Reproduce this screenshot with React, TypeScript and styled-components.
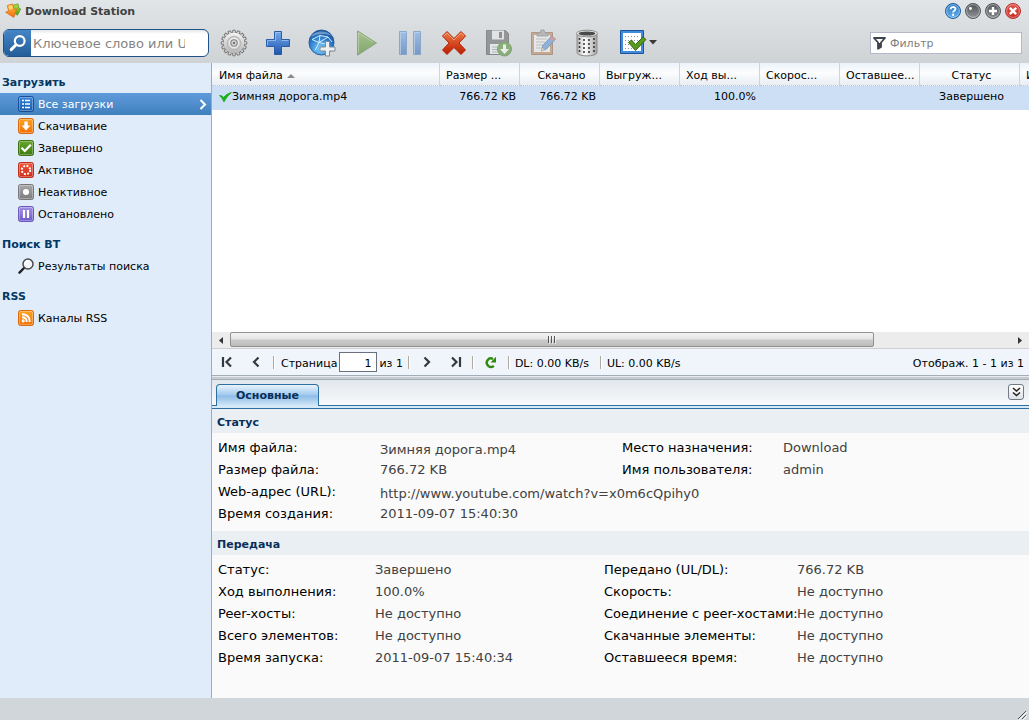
import React, { useState } from "react";
import styled, { createGlobalStyle, css } from "styled-components";

const GlobalStyle = createGlobalStyle`
  *, *::before, *::after { box-sizing: border-box; }
  body {
    margin: 0;
    font-family: "DejaVu Sans", Verdana, sans-serif;
    font-size: 11px;
    line-height: 14px;
    color: #000;
  }
  button, input { font: inherit; }
`;

/* ---------- window frame ---------- */

const Window = styled.div`
  display: flex;
  flex-direction: column;
  min-height: 100vh;
  background: #d1d6da;
`;

const Top = styled.header`
  background: linear-gradient(#e1e5e8, #cfd3d6);
`;

const TitleBar = styled.div`
  display: flex;
  align-items: center;
  gap: 4px;
  height: 22px;
  padding: 0 8px 0 5px;
`;

const Title = styled.h1`
  flex: 1;
  margin: 0;
  padding-top: 1px;
  font-size: 11px;
  font-weight: bold;
  color: #414141;
`;

const PlainButton = styled.button`
  display: flex;
  align-items: center;
  justify-content: center;
  flex: none;
  border: 0;
  padding: 0;
  background: none;
  color: inherit;
  cursor: pointer;
`;

const WindowButton = styled(PlainButton)`
  width: 16px;
  height: 18px;
`;

const Toolbar = styled.div`
  display: flex;
  align-items: center;
  height: 41px;
  padding-right: 7px;
`;

const SearchArea = styled.div`
  flex: none;
  width: 212px;
  padding: 0 3px;
`;

const SearchBox = styled.form`
  display: flex;
  height: 28px;
  border: 1px solid #1f5287;
  border-radius: 6px;
  overflow: hidden;
  background: linear-gradient(#e4e7e9, #fff 4px);
`;

const SearchButton = styled(PlainButton)`
  width: 27px;
  background: linear-gradient(#4686c6, #235c99);
`;

const SearchInput = styled.input`
  width: 155px;
  border: 0;
  padding: 2px 1px 0 2px;
  font-size: 13px;
  background: none;
  outline: none;
  &::placeholder { color: #858585; opacity: 1; }
`;

const ToolGroup = styled.div`
  display: flex;
  flex: 1;
`;

const ToolButton = styled(PlainButton)<{ $wide?: boolean }>`
  width: ${(p) => (p.$wide ? 60 : 44)}px;
  height: 32px;
  gap: 2px;
  &:disabled { opacity: 0.55; cursor: default; }
`;

const FilterBox = styled.label`
  display: flex;
  align-items: center;
  gap: 4px;
  width: 152px;
  height: 22px;
  padding: 0 2px;
  border: 1px solid #b5b8c8;
  background: #fff;
`;

const FilterInput = styled.input`
  flex: 1;
  min-width: 0;
  border: 0;
  padding: 2px 0 0;
  background: none;
  outline: none;
  &::placeholder { color: #808080; opacity: 1; }
`;

const Body = styled.div`
  display: flex;
  flex: 1;
`;

const Footer = styled.footer`
  display: flex;
  align-items: flex-end;
  justify-content: flex-end;
  height: 22px;
  background: #d1d6da;
`;

/* ---------- sidebar ---------- */

const Sidebar = styled.nav`
  flex: none;
  width: 212px;
  padding-top: 8px;
  border-right: 1px solid #9fabb6;
  background: #e0ecfa;
`;

const NavSection = styled.section`
  margin-bottom: 8px;
`;

const NavHeading = styled.h2`
  margin: 0;
  padding: 2px 0 0 2px;
  font-size: 11px;
  line-height: 20px;
  color: #023764;
`;

const NavItem = styled(PlainButton)<{ $active: boolean }>`
  justify-content: flex-start;
  gap: 4px;
  width: 100%;
  height: 22px;
  padding: 0 4px 0 18px;
  ${(p) =>
    p.$active &&
    css`
      color: #fff;
      background: linear-gradient(#5f9bdb, #4080bd);
    `}
`;

const NavLabel = styled.span`
  flex: 1;
  padding-top: 2px;
  text-align: left;
`;

/* ---------- list ---------- */

const Main = styled.main`
  display: flex;
  flex-direction: column;
  flex: 1;
  min-width: 0;
  background: #fff;
`;

const GridArea = styled.div`
  flex: 1;
  min-height: 269px;
  overflow: hidden;
`;

const Grid = styled.table`
  width: 1000px;
  table-layout: fixed;
  border-collapse: separate;
  border-spacing: 0;
`;

const HeadCell = styled.th<{ $align?: string }>`
  height: 23px;
  padding: 3px 2px 0 6px;
  border-right: 1px solid #d0d4d8;
  border-bottom: 1px dotted #b9c6d4;
  overflow: hidden;
  font-weight: normal;
  text-align: ${(p) => p.$align || "left"};
  white-space: nowrap;
  background: linear-gradient(#ecf3fa, #fcfdfe 45%, #e9edf2);
  &:first-child { padding-left: 7px; }
`;

const SortMark = styled.span`
  display: inline-block;
  margin-left: 4px;
  border: 4px solid transparent;
  border-top-width: 0;
  border-bottom-color: #8a8a8a;
  vertical-align: 1px;
`;

const Cell = styled.td<{ $align?: string }>`
  height: 24px;
  padding: 0 4px 3px 7px;
  overflow: hidden;
  white-space: nowrap;
  text-align: ${(p) => p.$align || "left"};
  background: #cddff4;
`;

const FileName = styled.span`
  display: flex;
  align-items: center;
`;

const ScrollBar = styled.div`
  display: flex;
  height: 17px;
  border-bottom: 1px solid #d0d0d0;
  background: #ececec;
`;

const ScrollArrow = styled(PlainButton)`
  width: 18px;
`;

const ScrollTrack = styled.div`
  flex: 1;
`;

const ScrollThumb = styled.div`
  display: flex;
  align-items: center;
  justify-content: center;
  width: 82.5%;
  height: 15px;
  border: 1px solid #909090;
  border-radius: 2px;
  background: linear-gradient(#f3f3f3, #e4e4e4 48%, #cbcbcb 52%, #bcbcbc);
`;

const Pager = styled.div`
  display: flex;
  align-items: center;
  height: 26px;
  padding: 0 5px 0 0;
  background: #eff5fa;
`;

const PagerButton = styled(PlainButton)`
  width: 29px;
  height: 22px;
`;

const PagerText = styled.span<{ $width?: number }>`
  min-width: ${(p) => p.$width ?? 0}px;
  padding-top: 3px;
`;

const Divider = styled.span<{ $before?: number; $after?: number }>`
  width: 2px;
  height: 13px;
  margin: 0 ${(p) => p.$after ?? 6}px 0 ${(p) => p.$before ?? 4}px;
  border-left: 1px solid #b0aa9c;
  border-right: 1px solid #fff;
`;

const PageInput = styled.input`
  width: 38px;
  height: 20px;
  margin: 0 2px;
  padding: 2px 5px 0;
  border: 1px solid #68717c;
  text-align: right;
  background: #fff;
`;

const Spacer = styled.span`
  flex: 1;
`;

const Splitter = styled.div`
  height: 5px;
  border-top: 1px solid #a3adb5;
  border-bottom: 1px solid #a3adb5;
  background: linear-gradient(#e6eaed 1px, #c6cdd2 1px);
`;

/* ---------- details ---------- */

const TabStrip = styled.div`
  display: flex;
  align-items: flex-end;
  height: 26px;
  padding: 0 5px 0 4px;
  border-bottom: 1px solid #2f6f9f;
  background: linear-gradient(#e2e7ec, #f8f9fb);
`;

const TabLine = styled.div`
  height: 3px;
  border-bottom: 1px solid #2f6f9f;
  background: #d5e9f8;
`;

const Tab = styled(PlainButton)`
  width: 103px;
  height: 22px;
  margin-bottom: -1px;
  border: 1px solid #2f6f9f;
  border-bottom: 0;
  border-radius: 4px 4px 0 0;
  font-weight: bold;
  color: #08305a;
  background: linear-gradient(#e9f4fd, #9fc9ee 48%, #8cbce7 52%, #d5e9f8);
`;

const CollapseButton = styled(PlainButton)`
  width: 16px;
  height: 16px;
  margin-bottom: 5px;
  border: 1px solid #6f7a84;
  border-radius: 3px;
  background: linear-gradient(#fff, #dfe4e8);
`;

const Details = styled.section`
  background: #fafafa;
`;

const Block = styled.section<{ $last?: boolean }>`
  padding-bottom: ${(p) => (p.$last ? 29 : 6)}px;
`;

const BlockHeading = styled.h2`
  margin: 0 0 4px;
  padding: 3px 0 0 5px;
  font-size: 11px;
  line-height: 21px;
  color: #08305a;
  background: #eaeff4;
`;

const InfoTable = styled.table`
  width: 100%;
  table-layout: fixed;
  border-collapse: collapse;
  font-size: 13px;
  line-height: 18px;
`;

const InfoLabel = styled.th`
  padding: 2px 0 2px 6px;
  font-weight: normal;
  text-align: left;
  vertical-align: top;
  white-space: nowrap;
`;

const InfoValue = styled.td<{ $selectable?: boolean }>`
  padding: ${(p) => (p.$selectable ? "4px 0 0 6px" : "2px 0 2px 6px")};
  color: #414141;
  vertical-align: top;
  white-space: nowrap;
`;

/* ---------- drawings ---------- */

type Stops = [string, string];

const Grad = ({ id, c }: { id: string; c: Stops }) => (
  <linearGradient id={id} x1="0" y1="0" x2="0" y2="1">
    <stop offset="0" stopColor={c[0]} />
    <stop offset="1" stopColor={c[1]} />
  </linearGradient>
);

const AppIcon = () => (
  <svg width="16" height="16" viewBox="0 0 16 16">
    <defs>
      <Grad id="apG" c={["#b5e34c", "#4f9a10"]} />
      <Grad id="apO" c={["#ffc83d", "#ee6a10"]} />
    </defs>
    <path d="M8 2.300l5-1.500 1 4.700 1.800.4-3.300 6.300-5.500-3.200z" fill="url(#apG)" stroke="#5a9a1c" strokeWidth=".7" />
    <path d="M2.300 2.600l5.200-1.700 1.500 5.300 2.600-.2-2.800 8.500L.6 9.200l3-1.200z" fill="url(#apO)" stroke="#e0701c" strokeWidth=".8" />
    <path d="M3.400 3.400l3.600-1.200 1 3.600-3.600 1z" fill="#ffe590" opacity=".8" />
  </svg>
);

const OrbIcon = ({ kind }: { kind: "help" | "min" | "max" | "close" }) => {
  const c: Record<string, Stops> = {
    help: ["#2b78c4", "#5fb0ee"],
    min: ["#4c4f52", "#95989b"],
    max: ["#55585b", "#86898c"],
    close: ["#e0564e", "#c8241d"],
  };
  const edge = { help: "#1c5c9f", min: "#55585b", max: "#55585b", close: "#b5302a" }[kind];
  return (
    <svg width="16" height="16" viewBox="0 0 16 16">
      <defs>
        <Grad id={"orb" + kind} c={c[kind]} />
      </defs>
      <circle cx="8" cy="8" r="7.500" fill={`url(#orb${kind})`} stroke={edge} />
      <circle cx="8" cy="8" r="6.400" fill="none" stroke="#fff" strokeOpacity=".4" />
      {kind === "help" && (
        <>
          <path d="M5.600 6.300c0-3 4.900-3 4.900-.2C10.500 7.700 8.100 7.600 8.100 9.600" fill="none" stroke="#fff" strokeWidth="1.800" />
          <rect x="7.100" y="10.800" width="2" height="2" fill="#fff" />
        </>
      )}
      {kind === "min" && <circle cx="5.500" cy="5.500" r="1.400" fill="#fff" />}
      {kind === "max" && <path d="M8 4v8M4 8h8" stroke="#fff" strokeWidth="2.400" />}
      {kind === "close" && <path d="M4.800 4.800l6.400 6.400M11.200 4.800l-6.400 6.400" stroke="#fff" strokeWidth="2.400" />}
    </svg>
  );
};

const SearchIcon = () => (
  <svg width="18" height="18" viewBox="0 0 18 18" fill="none" stroke="#fff">
    <circle cx="10.700" cy="7" r="4.900" strokeWidth="2.200" />
    <path d="M7 10.800l-4.800 4.800" strokeWidth="3" strokeLinecap="round" />
  </svg>
);

const GearIcon = () => (
  <svg width="28" height="28" viewBox="-14 -14 28 28">
    <defs>
      <Grad id="gear" c={["#f4f4f4", "#b5b5b5"]} />
    </defs>
    {Array.from({ length: 16 }, (_, i) => (
      <path
        key={i}
        d="M-1.700 -10L-1.100 -12.800H1.100L1.700 -10Z"
        transform={`rotate(${(i * 360) / 16})`}
        fill="#dcdcdc"
        stroke="#777"
        strokeWidth="1"
      />
    ))}
    <circle r="10.500" fill="url(#gear)" />
    <circle r="6.800" fill="#c6c6c6" stroke="#b0b0b0" strokeWidth=".8" />
    <circle r="5" fill="#e8e8e8" stroke="#f4f4f4" strokeWidth=".8" />
    <circle r="3.200" fill="#d8d8d8" stroke="#808080" strokeWidth="1.100" />
    <circle r="1.300" fill="#777" />
  </svg>
);

const PlusIcon = () => (
  <svg width="26" height="26" viewBox="0 0 26 26">
    <defs>
      <Grad id="plus" c={["#76aaea", "#1e55ae"]} />
    </defs>
    <path d="M9.500 1.500h7v8h8v7h-8v8h-7v-8h-8v-7h8z" fill="url(#plus)" stroke="#2a5ca8" />
    <path d="M10.500 10.500v-8h5M2.500 15.500v-5h8M16.500 10.500h7" fill="none" stroke="#a9ccf5" strokeOpacity=".7" />
  </svg>
);

const GlobeIcon = () => (
  <svg width="28" height="28" viewBox="0 0 28 28">
    <defs>
      <radialGradient id="globe" cx=".45" cy=".75" r=".75">
        <stop offset="0" stopColor="#7fd0ff" />
        <stop offset=".6" stopColor="#2c7ccb" />
        <stop offset="1" stopColor="#15509a" />
      </radialGradient>
    </defs>
    <circle cx="13.500" cy="13.500" r="12.500" fill="url(#globe)" stroke="#235f9f" />
    <path d="M4 10.500l8-4 8 1.500 4 5M12 6.500l-1 7 9-5.500M4 10.500l7 3-4 8M11 13.500l8 2" fill="none" stroke="#d4edff" strokeWidth="1" />
    <path d="M3 8C6 1.500 18 0 24 7 17 4 9 4.500 3 8z" fill="#fff" opacity=".35" />
    <path d="M17.500 12.500h4v5.500h5.500v4h-5.500v5h-4v-5h-5.500v-4h5.500z" fill="#eceeef" stroke="#7d8a96" />
  </svg>
);

const PlayIcon = () => (
  <svg width="28" height="28" viewBox="0 0 28 28">
    <defs>
      <Grad id="play" c={["#83ad52", "#3f8115"]} />
    </defs>
    <path d="M5.500 1.800L24.500 14 5.500 26.200z" fill="url(#play)" stroke="#4f8030" />
    <path d="M6.500 24V4L21 13" fill="none" stroke="#c0dd9f" strokeOpacity=".6" />
  </svg>
);

const PauseIcon = () => (
  <svg width="24" height="26" viewBox="0 0 24 26">
    <defs>
      <Grad id="pause" c={["#74a8e8", "#2d67b9"]} />
    </defs>
    <path d="M1.500 1.500h7v23h-7zM15.500 1.500h7v23h-7z" fill="url(#pause)" stroke="#4c7fbe" />
    <path d="M2.500 24V2.500H8M16.500 24V2.500H22" fill="none" stroke="#b4d2f5" strokeOpacity=".7" />
  </svg>
);

const RemoveIcon = () => (
  <svg width="26" height="26" viewBox="0 0 26 26">
    <defs>
      <Grad id="rem" c={["#f07a45", "#bb1a00"]} />
    </defs>
    <path d="M6 1.500l7 7 7-7 4.500 4.500-6.500 7 6.500 7-4.500 4.500-7-7-7 7L1.500 20 8 13 1.500 6z" fill="url(#rem)" stroke="#b02a0c" strokeLinejoin="round" />
    <path d="M3 6l3-3 7 7 7-7 3 3" fill="none" stroke="#f9b08c" strokeOpacity=".8" />
  </svg>
);

const SaveIcon = () => (
  <svg width="28" height="28" viewBox="0 0 28 28">
    <path d="M2.500 1.500h19l3 3v21h-22z" fill="#5f5f5f" stroke="#474747" />
    <path d="M8 1.500h12v9H8z" fill="#e9e9e9" />
    <path d="M15 3h3v6h-3z" fill="#555" />
    <path d="M6 15h15v10H6z" fill="#f2f2f2" />
    <path d="M8 18h9M8 20.500h9M8 23h9" stroke="#999" />
    <circle cx="20.500" cy="20" r="7" fill="#4e8f2a" stroke="#3f781f" />
    <path d="M19 15.500h3v4.500h3L20.500 25 16 20h3z" fill="#fff" />
  </svg>
);

const ClipboardIcon = () => (
  <svg width="28" height="28" viewBox="0 0 28 28">
    <path d="M3.500 3.500h21v22h-21z" fill="#b98458" stroke="#93603a" />
    <path d="M6 6h16v17H6z" fill="#f4f4f4" />
    <path d="M8 10h11M8 13h9M8 16h8M8 19h5" stroke="#a9a9a9" />
    <path d="M9 7V4h3l1-3h3l1 3h3v3z" fill="#9b9b9b" stroke="#777" />
    <path d="M23.500 7l4 3-9 10-5 2 1-5z" fill="#5b92d6" stroke="#3a67a3" />
    <path d="M23.500 7l4 3-2 2-4-3z" fill="#d66a5c" />
    <path d="M13.500 22l.6-3 2.400 2z" fill="#f3d9a5" />
  </svg>
);

const TrashIcon = () => (
  <svg width="28" height="28" viewBox="-3 0 28 28">
    <defs>
      <linearGradient id="bin" x1="0" x2="1" y1="0" y2="0">
        <stop offset="0" stopColor="#b5b5b5" />
        <stop offset=".4" stopColor="#fff" />
        <stop offset="1" stopColor="#a3a3a3" />
      </linearGradient>
    </defs>
    <path d="M2 5v18.500c0 4.500 20 4.500 20 0V5z" fill="url(#bin)" stroke="#8a8a8a" />
    {[9, 13, 17, 21].map((y) => (
      <path
        key={y}
        d={`M4.500 ${y}v2M9 ${y + 1}v2M14 ${y + 1}v2M19 ${y}v2`}
        stroke="#3a3a3a"
        strokeWidth="1.600"
      />
    ))}
    <ellipse cx="12" cy="4.500" rx="10.500" ry="3.300" fill="#ececec" stroke="#8a8a8a" />
    <ellipse cx="12" cy="4.500" rx="8.500" ry="2" fill="#4a4a4a" />
  </svg>
);

const ChecklistIcon = () => (
  <svg width="28" height="28" viewBox="0 0 28 28">
    <path d="M1.500 1.500h23v23h-23z" fill="#3f8bdd" stroke="#1c5399" strokeLinejoin="round" />
    <path d="M4 4h18v18H4z" fill="#fff" />
    <path d="M6 7.500h14M6 11.500h14M6 15.500h14M6 19.500h14" stroke="#8495a6" strokeDasharray="1 2" />
    <path d="M9.500 13.500l3-2.500 4 4.500 7.500-7.500 3 2.500-10.500 11z" fill="#579a1f" stroke="#356a0d" />
  </svg>
);

const CaretIcon = () => (
  <svg width="8" height="5" viewBox="0 0 8 5">
    <path d="M0 0h8L4 4.500z" fill="#3a3a3a" />
  </svg>
);

const FunnelIcon = () => (
  <svg width="13" height="14" viewBox="0 0 13 14">
    <path d="M1 2h11L8 6.500V11l-3 1.800V6.500z" fill="#fff" stroke="#3e444a" strokeWidth="1.800" strokeLinejoin="round" />
    <path d="M5 7h3v4l-3 2z" fill="#3e444a" />
  </svg>
);

const badgeColors: Record<string, [string, string, string]> = {
  all: ["#3a86dd", "#165cac", "#164f96"],
  down: ["#ffa424", "#f07004", "#d8690d"],
  done: ["#69a52e", "#3c7a10", "#3b7413"],
  active: ["#f0593d", "#cf2713", "#b9301d"],
  idle: ["#aaa", "#7b7b7b", "#777"],
  stop: ["#a393e8", "#6d57c7", "#6a58bb"],
  rss: ["#ffa424", "#f07004", "#d8690d"],
};

const marks: Record<string, React.ReactNode> = {
  all: <path d="M4 4.500h2M7 4.500h5M4 8h2M7 8h5M4 11.500h2M7 11.500h5" stroke="#fff" strokeWidth="1.500" />,
  down: <path d="M6.300 3.500h3.400v4h2.600L8 12.500 3.700 7.500h2.600z" fill="#fff" />,
  done: <path d="M3.500 7.800l3.300 3.200 6-6.300" fill="none" stroke="#fff" strokeWidth="2.200" />,
  active: <circle cx="8" cy="8" r="4.200" fill="none" stroke="#fff" strokeWidth="2" strokeDasharray="1.900 1.400" />,
  idle: <circle cx="8" cy="8" r="3" fill="#fff" />,
  stop: <path d="M6 4v8M10 4v8" stroke="#fff" strokeWidth="2.200" />,
  rss: (
    <g fill="none" stroke="#fff" strokeWidth="1.900">
      <path d="M4 7.300c3 0 4.700 1.700 4.700 4.700M4 4.200c5 0 7.800 2.800 7.800 7.800" />
      <circle cx="5.200" cy="10.900" r=".6" />
    </g>
  ),
};

const NavIcon = ({ kind }: { kind: string }) => {
  if (kind === "find") {
    return (
      <svg width="16" height="16" viewBox="0 0 16 16">
        <path d="M6 10l-4.500 4.700" stroke="#222" strokeWidth="2.400" strokeLinecap="round" />
        <circle cx="10" cy="6" r="5" fill="#f3f6f8" stroke="#4a4a4a" strokeWidth="1.500" />
        <path d="M7 6c0-2 1.500-3 3-3" fill="none" stroke="#fff" strokeWidth="1.500" />
      </svg>
    );
  }
  const [a, b, edge] = badgeColors[kind];
  return (
    <svg width="16" height="16" viewBox="0 0 16 16">
      <defs>
        <Grad id={"nav" + kind} c={[a, b]} />
      </defs>
      <rect x=".5" y=".5" width="15" height="15" rx="2" fill={`url(#nav${kind})`} stroke={edge} />
      <rect x="1.500" y="1.500" width="13" height="13" rx="1" fill="none" stroke="#fff" strokeOpacity=".3" />
      {marks[kind]}
    </svg>
  );
};

const ChevronIcon = () => (
  <svg width="8" height="11" viewBox="0 0 8 11">
    <path d="M1.500 1l4.500 4.500L1.500 10" fill="none" stroke="#fff" strokeWidth="2" />
  </svg>
);

const TickIcon = () => (
  <svg width="13" height="12" viewBox="0 0 13 12">
    <path d="M.5 4.500C2.500 4.500 3.500 5 4.500 6.500 7 3.500 9.500 2.200 12.500 1.500 9 4.500 7 7 5 11 4 8.500 2.500 6.500.5 4.500z" fill="#16b516" stroke="#16a016" strokeWidth=".7" />
  </svg>
);

const PageIcon = ({ kind }: { kind: "first" | "prev" | "next" | "last" }) => {
  const paths = {
    first: "M2 1v10M10 1.500L5.500 6l4.500 4.500",
    prev: "M8.500 1.500L4 6l4.500 4.500",
    next: "M3.500 1.500L8 6l-4.500 4.500",
    last: "M10 1v10M2 1.500L6.500 6 2 10.500",
  };
  return (
    <svg width="12" height="12" viewBox="0 0 12 12">
      <path d={paths[kind]} fill="none" stroke="#333a42" strokeWidth="2.200" />
    </svg>
  );
};

const RefreshIcon = () => (
  <svg width="13" height="13" viewBox="0 0 13 13">
    <path d="M9.800 9.800A4.200 4.200 0 1 1 9 3" fill="none" stroke="#2f8a0c" strokeWidth="2.400" />
    <path d="M12 .8v5.700H6.500z" fill="#2f8a0c" />
  </svg>
);

const ArrowIcon = ({ right }: { right?: boolean }) => (
  <svg width="4" height="7" viewBox="0 0 4 7">
    <path d={right ? "M0 0v7l4-3.500z" : "M4 0v7L0 3.500z"} fill="#333" />
  </svg>
);

const RidgesIcon = () => (
  <svg width="9" height="8" viewBox="0 0 9 8">
    <path d="M.5 0v7M3.500 0v7M6.500 0v7" stroke="#555" />
    <path d="M1.500 0v8M4.500 0v8M7.500 0v8" stroke="#fff" strokeOpacity=".6" />
  </svg>
);

const CollapseIcon = () => (
  <svg width="9" height="10" viewBox="0 0 9 10">
    <path d="M1 1l3.500 3L8 1M1 5.500l3.500 3 3.500-3" fill="none" stroke="#222" strokeWidth="1.500" />
  </svg>
);

const GripIcon = () => (
  <svg width="12" height="10" viewBox="0 0 12 10">
    <path d="M1 9L9 1M5 9l4-4" stroke="#4e5358" />
    <path d="M2 10l8-8M6 10l4-4" stroke="#fff" />
  </svg>
);

/* ---------- data ---------- */

const sections = [
  {
    title: "Загрузить",
    items: [
      ["all", "Все загрузки"],
      ["down", "Скачивание"],
      ["done", "Завершено"],
      ["active", "Активное"],
      ["idle", "Неактивное"],
      ["stop", "Остановлено"],
    ],
  },
  { title: "Поиск BT", items: [["find", "Результаты поиска"]] },
  { title: "RSS", items: [["rss", "Каналы RSS"]] },
];

const tools = [
  { label: "Настройки", icon: <GearIcon /> },
  { label: "Добавить", icon: <PlusIcon /> },
  { label: "Добавить URL", icon: <GlobeIcon /> },
  { label: "Возобновить", icon: <PlayIcon />, disabled: true },
  { label: "Пауза", icon: <PauseIcon />, disabled: true },
  { label: "Удалить", icon: <RemoveIcon /> },
  { label: "Сохранить", icon: <SaveIcon />, disabled: true },
  { label: "Изменить", icon: <ClipboardIcon />, disabled: true },
  { label: "Очистить", icon: <TrashIcon /> },
];

const columns = [
  { title: "Размер ...", value: "766.72 KB", align: "right" },
  { title: "Скачано", value: "766.72 KB", align: "right", head: "center" },
  { title: "Выгруж...", value: "" },
  { title: "Ход вы...", value: "100.0%", align: "right" },
  { title: "Скорос...", value: "" },
  { title: "Оставшее...", value: "" },
  { title: "Статус", value: "Завершено", align: "center", head: "center", width: 100 },
  { title: "Источник", value: "" },
];

type Info = { label: string; value: string; selectable?: boolean };

const statusRows: [Info, Info?][] = [
  [
    { label: "Имя файла:", value: "Зимняя дорога.mp4", selectable: true },
    { label: "Место назначения:", value: "Download" },
  ],
  [
    { label: "Размер файла:", value: "766.72 KB" },
    { label: "Имя пользователя:", value: "admin" },
  ],
  [{ label: "Web-адрес (URL):", value: "http://www.youtube.com/watch?v=x0m6cQpihy0", selectable: true }],
  [{ label: "Время создания:", value: "2011-09-07 15:40:30" }],
];

const transferRows: [Info, Info?][] = [
  [{ label: "Статус:", value: "Завершено" }, { label: "Передано (UL/DL):", value: "766.72 KB" }],
  [{ label: "Ход выполнения:", value: "100.0%" }, { label: "Скорость:", value: "Не доступно" }],
  [{ label: "Peer-хосты:", value: "Не доступно" }, { label: "Соединение с peer-хостами:", value: "Не доступно" }],
  [{ label: "Всего элементов:", value: "Не доступно" }, { label: "Скачанные элементы:", value: "Не доступно" }],
  [{ label: "Время запуска:", value: "2011-09-07 15:40:34" }, { label: "Оставшееся время:", value: "Не доступно" }],
];

const InfoBlock = ({
  title,
  rows,
  widths,
  last,
}: {
  title: string;
  rows: [Info, Info?][];
  widths: number[];
  last?: boolean;
}) => (
  <Block $last={last}>
    <BlockHeading>{title}</BlockHeading>
    <InfoTable>
      <colgroup>
        {widths.map((w, i) => (
          <col key={i} width={w} />
        ))}
        <col />
      </colgroup>
      <tbody>
        {rows.map(([a, b]) => (
          <tr key={a.label}>
            <InfoLabel scope="row">{a.label}</InfoLabel>
            <InfoValue $selectable={a.selectable} colSpan={b ? 1 : 3}>
              {a.value}
            </InfoValue>
            {b && (
              <>
                <InfoLabel scope="row">{b.label}</InfoLabel>
                <InfoValue>{b.value}</InfoValue>
              </>
            )}
          </tr>
        ))}
      </tbody>
    </InfoTable>
  </Block>
);

export default function App() {
  const [active, setActive] = useState("all");

  return (
    <Window>
      <GlobalStyle />
      <Top>
        <TitleBar>
          <AppIcon />
          <Title>Download Station</Title>
          <WindowButton aria-label="Справка"><OrbIcon kind="help" /></WindowButton>
          <WindowButton aria-label="Свернуть"><OrbIcon kind="min" /></WindowButton>
          <WindowButton aria-label="Развернуть"><OrbIcon kind="max" /></WindowButton>
          <WindowButton aria-label="Закрыть"><OrbIcon kind="close" /></WindowButton>
        </TitleBar>
        <Toolbar>
          <SearchArea>
            <SearchBox onSubmit={(e) => e.preventDefault()}>
              <SearchButton aria-label="Поиск"><SearchIcon /></SearchButton>
              <SearchInput aria-label="Поиск" placeholder="Ключевое слово или URL" />
            </SearchBox>
          </SearchArea>
          <ToolGroup>
            {tools.map((t) => (
              <ToolButton key={t.label} aria-label={t.label} disabled={t.disabled}>
                {t.icon}
              </ToolButton>
            ))}
            <ToolButton $wide aria-label="Действия">
              <ChecklistIcon />
              <CaretIcon />
            </ToolButton>
          </ToolGroup>
          <FilterBox>
            <FunnelIcon />
            <FilterInput aria-label="Фильтр" placeholder="Фильтр" />
          </FilterBox>
        </Toolbar>
      </Top>

      <Body>
        <Sidebar>
          {sections.map((s) => (
            <NavSection key={s.title}>
              <NavHeading>{s.title}</NavHeading>
              {s.items.map(([kind, label]) => (
                <NavItem key={kind} $active={active === kind} onClick={() => setActive(kind)}>
                  <NavIcon kind={kind} />
                  <NavLabel>{label}</NavLabel>
                  {active === kind && <ChevronIcon />}
                </NavItem>
              ))}
            </NavSection>
          ))}
        </Sidebar>

        <Main>
          <GridArea>
            <Grid>
              <colgroup>
                <col width={228} />
                {columns.map((c) => (
                  <col key={c.title} width={c.width || 80} />
                ))}
                <col />
              </colgroup>
              <thead>
                <tr>
                  <HeadCell>Имя файла<SortMark /></HeadCell>
                  {columns.map((c) => (
                    <HeadCell key={c.title} $align={c.head}>{c.title}</HeadCell>
                  ))}
                  <HeadCell />
                </tr>
              </thead>
              <tbody>
                <tr>
                  <Cell>
                    <FileName><TickIcon />Зимняя дорога.mp4</FileName>
                  </Cell>
                  {columns.map((c) => (
                    <Cell key={c.title} $align={c.align}>{c.value}</Cell>
                  ))}
                  <Cell />
                </tr>
              </tbody>
            </Grid>
          </GridArea>

          <ScrollBar>
            <ScrollArrow aria-label="Прокрутить влево"><ArrowIcon /></ScrollArrow>
            <ScrollTrack>
              <ScrollThumb><RidgesIcon /></ScrollThumb>
            </ScrollTrack>
            <ScrollArrow aria-label="Прокрутить вправо"><ArrowIcon right /></ScrollArrow>
          </ScrollBar>

          <Pager>
            <PagerButton aria-label="Первая страница"><PageIcon kind="first" /></PagerButton>
            <PagerButton aria-label="Предыдущая страница"><PageIcon kind="prev" /></PagerButton>
            <Divider $before={3} />
            <PagerText as="label" htmlFor="page">Страница</PagerText>
            <PageInput id="page" defaultValue="1" />
            <PagerText>из 1</PagerText>
            <Divider $before={5} $after={3} />
            <PagerButton aria-label="Следующая страница"><PageIcon kind="next" /></PagerButton>
            <PagerButton aria-label="Последняя страница"><PageIcon kind="last" /></PagerButton>
            <Divider $before={1} $after={2} />
            <PagerButton aria-label="Обновить"><RefreshIcon /></PagerButton>
            <Divider $before={3} $after={5} />
            <PagerText $width={81}>DL: 0.00 KB/s</PagerText>
            <Divider $after={5} />
            <PagerText>UL: 0.00 KB/s</PagerText>
            <Spacer />
            <PagerText>Отображ. 1 - 1 из 1</PagerText>
          </Pager>
          <Splitter />

          <TabStrip>
            <Tab>Основные</Tab>
            <Spacer />
            <CollapseButton aria-label="Свернуть панель"><CollapseIcon /></CollapseButton>
          </TabStrip>
          <TabLine />
          <Details>
            <InfoBlock title="Статус" rows={statusRows} widths={[162, 242, 161]} />
            <InfoBlock title="Передача" rows={transferRows} widths={[157, 229, 193]} last />
          </Details>
        </Main>
      </Body>

      <Footer>
        <GripIcon />
      </Footer>
    </Window>
  );
}
